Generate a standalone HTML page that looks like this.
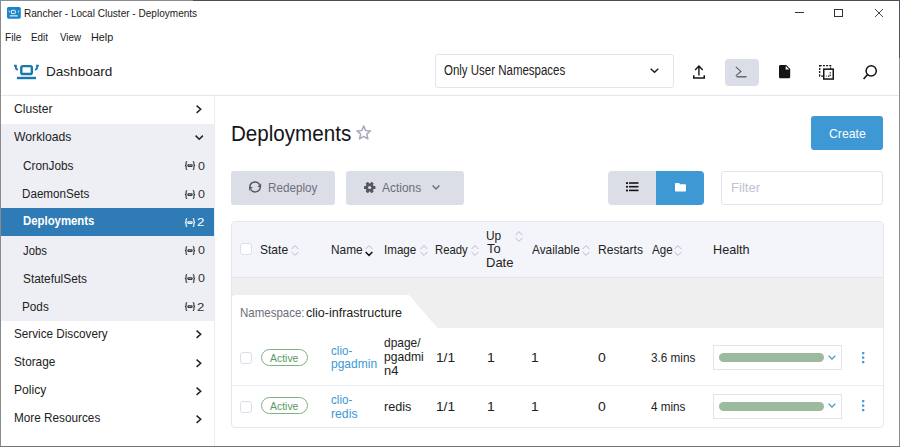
<!DOCTYPE html>
<html><head><meta charset="utf-8">
<style>
*{box-sizing:border-box;margin:0;padding:0}
html,body{width:900px;height:447px;overflow:hidden;background:#fff}
body{font-family:"Liberation Sans",sans-serif;color:#222;position:relative}
.a{position:absolute}
.t{position:absolute;white-space:nowrap;line-height:1;transform-origin:0 0}
svg{position:absolute;overflow:visible}
</style></head><body>
<div class="a" style="left:0;top:0;width:900px;height:1px;background:#8a8d93"></div>
<div class="a" style="left:193px;top:0;width:707px;height:1px;background:#4b505c"></div>
<div class="a" style="left:0;top:0;width:1px;height:447px;background:#8a8a8a"></div>
<div class="a" style="left:899px;top:0;width:1px;height:447px;background:#8c8c8c"></div>
<div class="a" style="left:899px;top:0;width:1px;height:58px;background:#4e5360"></div>
<div class="a" style="left:0;top:446px;width:900px;height:1px;background:#777"></div>
<svg style="left:7px;top:7.1px" width="14" height="12" viewBox="0 0 14 12">
 <rect x="0" y="0" width="13.8" height="11.7" rx="1.6" fill="#1a85c8"/>
 <rect x="4.35" y="3.3" width="3.95" height="3.35" rx="0.7" fill="none" stroke="#fff" stroke-width="0.95"/>
 <rect x="2.7" y="8.2" width="8" height="1.3" fill="#d2e7f5"/>
 <path d="M1.9 3.4L2.7 5.7M11.9 3.4L11.1 5.7" stroke="#bcdcf1" stroke-width="0.95"/>
</svg>
<div class="t" style="left:23.70px;top:8.00px;font-size:11px;color:#1a1a1a;transform:scaleX(0.9136);">Rancher - Local Cluster - Deployments</div>
<div class="a" style="left:795px;top:12px;width:9px;height:1px;background:#333"></div>
<div class="a" style="left:834px;top:9px;width:9px;height:8px;border:1px solid #333"></div>
<svg style="left:875px;top:9px" width="8" height="8" viewBox="0 0 8 8"><path d="M0 0L8 8M8 0L0 8" stroke="#3a3a3a" stroke-width="0.95"/></svg>
<div class="t" style="left:5.19px;top:32.00px;font-size:11px;color:#1a1a1a;transform:scaleX(0.9183);">File</div>
<div class="t" style="left:31.22px;top:32.00px;font-size:11px;color:#1a1a1a;transform:scaleX(0.8896);">Edit</div>
<div class="t" style="left:59.95px;top:32.00px;font-size:11px;color:#1a1a1a;transform:scaleX(0.8900);">View</div>
<div class="t" style="left:91.13px;top:32.00px;font-size:11px;color:#1a1a1a;transform:scaleX(0.9866);">Help</div>
<div class="a" style="left:1px;top:95px;width:898px;height:1px;background:#e6e7ec"></div>
<svg style="left:12px;top:62px" width="30" height="20" viewBox="0 0 30 20">
 <rect x="9.3" y="4.1" width="10.55" height="7.9" rx="1.6" fill="none" stroke="#1a78b0" stroke-width="2.4"/>
 <rect x="4.9" y="14.8" width="19.1" height="2.4" fill="#1a78b0"/>
 <path d="M2 3.75H3.9V5.8Q3.9 7.5 6 7.6" fill="none" stroke="#1a78b0" stroke-width="1.8"/>
 <path d="M26.9 3.75H25V5.8Q25 7.5 22.9 7.6" fill="none" stroke="#1a78b0" stroke-width="1.8"/>
</svg>
<div class="t" style="left:45.62px;top:65.00px;font-size:13.5px;color:#222;transform:scaleX(1.0038);">Dashboard</div>
<div class="a" style="left:435px;top:54px;width:239px;height:34px;border:1px solid #e3e4eb;border-radius:3px"></div>
<div class="t" style="left:443.88px;top:63.00px;font-size:14px;color:#222;transform:scaleX(0.8199);">Only User Namespaces</div>
<svg style="left:650px;top:68px" width="9" height="5" viewBox="0 0 9 5"><path d="M0.7 0.7L4.5 4.3L8.3 0.7" fill="none" stroke="#222" stroke-width="1.5"/></svg>
<svg style="left:693px;top:65px" width="12" height="14" viewBox="0 0 12 14">
 <path d="M5.9 1.3V10.6M2.1 4.9L5.9 1.1L9.7 4.9" fill="none" stroke="#141419" stroke-width="1.4"/>
 <path d="M0.75 10.2V13H11.25V10.2" fill="none" stroke="#141419" stroke-width="1.5"/>
</svg>
<div class="a" style="left:725px;top:58.5px;width:34px;height:27.5px;background:#dcdee7;border-radius:4px"></div>
<svg style="left:735px;top:66px" width="12" height="13" viewBox="0 0 12 13">
 <path d="M0.8 0.9L5.9 5.4L0.8 9.9" fill="none" stroke="#5c5e6a" stroke-width="1.2"/>
 <rect x="1.5" y="10.1" width="10" height="1.4" fill="#5c5e6a"/>
</svg>
<svg style="left:778.7px;top:65.3px" width="11.2" height="13.3" viewBox="0 0 11.2 13.3">
 <path d="M1.3 0H7.2L11.2 4V12Q11.2 13.3 9.9 13.3H1.3Q0 13.3 0 12V1.3Q0 0 1.3 0Z" fill="#141419"/>
 <path d="M6.7 1.1V4.5H10.1Z" fill="#fff"/>
</svg>
<svg style="left:819px;top:64.6px" width="15" height="15" viewBox="0 0 15 15">
 <rect x="0.7" y="0.7" width="10.9" height="10.4" fill="none" stroke="#141419" stroke-width="1.3" stroke-dasharray="2 1.2"/>
 <rect x="4.75" y="4.15" width="9.5" height="9.9" fill="#fff" stroke="#141419" stroke-width="1.5"/>
 <path d="M11.2 7.2V11.1H7.4" fill="none" stroke="#141419" stroke-width="1.1" stroke-dasharray="1.3 1.1"/>
</svg>
<svg style="left:863px;top:64.6px" width="15" height="15" viewBox="0 0 15 15">
 <circle cx="8.2" cy="5.9" r="5.1" fill="none" stroke="#141419" stroke-width="1.5"/>
 <path d="M4.7 9.5L0.6 14" stroke="#141419" stroke-width="1.6"/>
</svg>
<div class="a" style="left:1px;top:124.14px;width:213px;height:196.98px;background:#eeeff4"></div>
<div class="a" style="left:1px;top:208.26px;width:213px;height:28.14px;background:#2f7bb5"></div>
<div class="a" style="left:214px;top:96px;width:1px;height:350px;background:#ebecf1"></div>
<div class="t" style="left:13.89px;top:102.00px;font-size:13px;color:#222;transform:scaleX(0.9330);">Cluster</div>
<svg style="left:196.3px;top:105.30px" width="5.5" height="8.5" viewBox="0 0 5.5 8.5"><path d="M0.6 0.6L4.7 4.25L0.6 7.9" fill="none" stroke="#222" stroke-width="1.5"/></svg>
<div class="t" style="left:14.44px;top:130.00px;font-size:13px;color:#222;transform:scaleX(0.9382);">Workloads</div>
<svg style="left:194.8px;top:135.44px" width="8.5" height="5" viewBox="0 0 8.5 5"><path d="M0.6 0.6L4.25 4.3L7.9 0.6" fill="none" stroke="#222" stroke-width="1.5"/></svg>
<div class="t" style="left:22.71px;top:160.00px;font-size:12.5px;color:#222;transform:scaleX(0.9440);">CronJobs</div>
<svg style="left:184.5px;top:161.38px" width="10" height="9" viewBox="0 0 10 9">
 <path d="M2.2 0.5Q1.1 0.5 1.1 1.6V3.7L0.4 4.5L1.1 5.3V7.4Q1.1 8.5 2.2 8.5" fill="none" stroke="#333" stroke-width="1.1"/>
 <path d="M7.8 0.5Q8.9 0.5 8.9 1.6V3.7L9.6 4.5L8.9 5.3V7.4Q8.9 8.5 7.8 8.5" fill="none" stroke="#333" stroke-width="1.1"/>
 <rect x="2.3" y="3.2" width="5.4" height="2.7" rx="1.1" fill="#333"/>
 <rect x="3.6" y="4.2" width="2.8" height="0.7" fill="#eeeff4" opacity="0.7"/>
</svg>
<div class="t" style="left:197.50px;top:161.00px;font-size:11px;color:#333;transform:scaleX(1.1364);">0</div>
<div class="t" style="left:22.37px;top:188.00px;font-size:12.5px;color:#222;transform:scaleX(0.9320);">DaemonSets</div>
<svg style="left:184.5px;top:189.52px" width="10" height="9" viewBox="0 0 10 9">
 <path d="M2.2 0.5Q1.1 0.5 1.1 1.6V3.7L0.4 4.5L1.1 5.3V7.4Q1.1 8.5 2.2 8.5" fill="none" stroke="#333" stroke-width="1.1"/>
 <path d="M7.8 0.5Q8.9 0.5 8.9 1.6V3.7L9.6 4.5L8.9 5.3V7.4Q8.9 8.5 7.8 8.5" fill="none" stroke="#333" stroke-width="1.1"/>
 <rect x="2.3" y="3.2" width="5.4" height="2.7" rx="1.1" fill="#333"/>
 <rect x="3.6" y="4.2" width="2.8" height="0.7" fill="#eeeff4" opacity="0.7"/>
</svg>
<div class="t" style="left:197.50px;top:189.00px;font-size:11px;color:#333;transform:scaleX(1.1364);">0</div>
<div class="t" style="left:22.66px;top:215.00px;font-size:12.5px;color:#fff;font-weight:bold;transform:scaleX(0.9095);">Deployments</div>
<svg style="left:184.5px;top:217.66px" width="10" height="9" viewBox="0 0 10 9">
 <path d="M2.2 0.5Q1.1 0.5 1.1 1.6V3.7L0.4 4.5L1.1 5.3V7.4Q1.1 8.5 2.2 8.5" fill="none" stroke="#fff" stroke-width="1.1"/>
 <path d="M7.8 0.5Q8.9 0.5 8.9 1.6V3.7L9.6 4.5L8.9 5.3V7.4Q8.9 8.5 7.8 8.5" fill="none" stroke="#fff" stroke-width="1.1"/>
 <rect x="2.3" y="3.2" width="5.4" height="2.7" rx="1.1" fill="#fff"/>
 <rect x="3.6" y="4.2" width="2.8" height="0.7" fill="#2f7bb5" opacity="0.7"/>
</svg>
<div class="t" style="left:197.34px;top:217.00px;font-size:11px;color:#fff;transform:scaleX(1.1988);">2</div>
<div class="t" style="left:23.13px;top:245.00px;font-size:12.5px;color:#222;transform:scaleX(0.9010);">Jobs</div>
<svg style="left:184.5px;top:245.80px" width="10" height="9" viewBox="0 0 10 9">
 <path d="M2.2 0.5Q1.1 0.5 1.1 1.6V3.7L0.4 4.5L1.1 5.3V7.4Q1.1 8.5 2.2 8.5" fill="none" stroke="#333" stroke-width="1.1"/>
 <path d="M7.8 0.5Q8.9 0.5 8.9 1.6V3.7L9.6 4.5L8.9 5.3V7.4Q8.9 8.5 7.8 8.5" fill="none" stroke="#333" stroke-width="1.1"/>
 <rect x="2.3" y="3.2" width="5.4" height="2.7" rx="1.1" fill="#333"/>
 <rect x="3.6" y="4.2" width="2.8" height="0.7" fill="#eeeff4" opacity="0.7"/>
</svg>
<div class="t" style="left:197.50px;top:245.00px;font-size:11px;color:#333;transform:scaleX(1.1364);">0</div>
<div class="t" style="left:22.77px;top:273.00px;font-size:12.5px;color:#222;transform:scaleX(0.9492);">StatefulSets</div>
<svg style="left:184.5px;top:273.94px" width="10" height="9" viewBox="0 0 10 9">
 <path d="M2.2 0.5Q1.1 0.5 1.1 1.6V3.7L0.4 4.5L1.1 5.3V7.4Q1.1 8.5 2.2 8.5" fill="none" stroke="#333" stroke-width="1.1"/>
 <path d="M7.8 0.5Q8.9 0.5 8.9 1.6V3.7L9.6 4.5L8.9 5.3V7.4Q8.9 8.5 7.8 8.5" fill="none" stroke="#333" stroke-width="1.1"/>
 <rect x="2.3" y="3.2" width="5.4" height="2.7" rx="1.1" fill="#333"/>
 <rect x="3.6" y="4.2" width="2.8" height="0.7" fill="#eeeff4" opacity="0.7"/>
</svg>
<div class="t" style="left:197.50px;top:273.00px;font-size:11px;color:#333;transform:scaleX(1.1364);">0</div>
<div class="t" style="left:22.36px;top:301.00px;font-size:12.5px;color:#222;transform:scaleX(0.9386);">Pods</div>
<svg style="left:184.5px;top:302.08px" width="10" height="9" viewBox="0 0 10 9">
 <path d="M2.2 0.5Q1.1 0.5 1.1 1.6V3.7L0.4 4.5L1.1 5.3V7.4Q1.1 8.5 2.2 8.5" fill="none" stroke="#333" stroke-width="1.1"/>
 <path d="M7.8 0.5Q8.9 0.5 8.9 1.6V3.7L9.6 4.5L8.9 5.3V7.4Q8.9 8.5 7.8 8.5" fill="none" stroke="#333" stroke-width="1.1"/>
 <rect x="2.3" y="3.2" width="5.4" height="2.7" rx="1.1" fill="#333"/>
 <rect x="3.6" y="4.2" width="2.8" height="0.7" fill="#eeeff4" opacity="0.7"/>
</svg>
<div class="t" style="left:197.34px;top:302.00px;font-size:11px;color:#333;transform:scaleX(1.1988);">2</div>
<div class="t" style="left:13.97px;top:327.00px;font-size:13px;color:#222;transform:scaleX(0.9003);">Service Discovery</div>
<svg style="left:196.3px;top:330.42px" width="5.5" height="8.5" viewBox="0 0 5.5 8.5"><path d="M0.6 0.6L4.7 4.25L0.6 7.9" fill="none" stroke="#222" stroke-width="1.5"/></svg>
<div class="t" style="left:13.97px;top:355.00px;font-size:13px;color:#222;transform:scaleX(0.9068);">Storage</div>
<svg style="left:196.3px;top:358.56px" width="5.5" height="8.5" viewBox="0 0 5.5 8.5"><path d="M0.6 0.6L4.7 4.25L0.6 7.9" fill="none" stroke="#222" stroke-width="1.5"/></svg>
<div class="t" style="left:13.53px;top:383.00px;font-size:13px;color:#222;transform:scaleX(0.9326);">Policy</div>
<svg style="left:196.3px;top:386.70px" width="5.5" height="8.5" viewBox="0 0 5.5 8.5"><path d="M0.6 0.6L4.7 4.25L0.6 7.9" fill="none" stroke="#222" stroke-width="1.5"/></svg>
<div class="t" style="left:13.56px;top:411.00px;font-size:13px;color:#222;transform:scaleX(0.9045);">More Resources</div>
<svg style="left:196.3px;top:414.84px" width="5.5" height="8.5" viewBox="0 0 5.5 8.5"><path d="M0.6 0.6L4.7 4.25L0.6 7.9" fill="none" stroke="#222" stroke-width="1.5"/></svg>
<div class="t" style="left:230.85px;top:124.00px;font-size:21.5px;color:#141419;transform:scaleX(0.9579);">Deployments</div>
<svg style="left:355.6px;top:124.9px" width="15.4" height="15" viewBox="0 0 15.4 15">
 <path d="M7.70 1.05 L9.58 5.57 L14.45 5.96 L10.74 9.14 L11.87 13.89 L7.70 11.35 L3.53 13.89 L4.66 9.14 L0.95 5.96 L5.82 5.57Z" fill="none" stroke="#a7aabd" stroke-width="1.55" stroke-linejoin="round"/>
</svg>
<div class="a" style="left:811px;top:116px;width:72px;height:34px;background:#3d98d3;border-radius:3px"></div>
<div class="t" style="left:828.89px;top:127.00px;font-size:13.5px;color:#fff;transform:scaleX(0.9052);">Create</div>
<div class="a" style="left:231px;top:171px;width:104px;height:34px;background:#dcdee7;border-radius:3px"></div>
<svg style="left:249.2px;top:181.2px" width="12.5" height="12" viewBox="0 0 12.5 12">
 <path d="M0.9 6.6A5.2 5.2 0 0 1 10.6 3.6" fill="none" stroke="#54565f" stroke-width="1.45"/>
 <path d="M11.3 5.6A5.2 5.2 0 0 1 1.8 8.6" fill="none" stroke="#54565f" stroke-width="1.45"/>
 <path d="M12.1 2.2V6.1H8.4Z" fill="#54565f"/>
 <path d="M0.1 10V6.1H3.8Z" fill="#54565f"/>
</svg>
<div class="t" style="left:268.37px;top:182.00px;font-size:12.5px;color:#6c6e7a;transform:scaleX(0.9341);">Redeploy</div>
<div class="a" style="left:346px;top:171px;width:118px;height:34px;background:#dcdee7;border-radius:3px"></div>
<svg style="left:364.4px;top:181.6px" width="11.4" height="11" viewBox="-5.7 -5.5 11.4 11">
 <g fill="#54565f">
 <circle r="4"/>
 <rect x="-5.7" y="-1.5" width="11.4" height="3" rx="0.6"/>
 <rect x="-5.7" y="-1.5" width="11.4" height="3" rx="0.6" transform="rotate(60)"/>
 <rect x="-5.7" y="-1.5" width="11.4" height="3" rx="0.6" transform="rotate(120)"/>
 </g>
 <circle r="1.6" fill="#dcdee7"/>
</svg>
<div class="t" style="left:381.90px;top:182.00px;font-size:12.5px;color:#6c6e7a;transform:scaleX(0.9541);">Actions</div>
<svg style="left:432px;top:185px" width="8" height="5" viewBox="0 0 8 5"><path d="M0.6 0.6L4 4.1L7.4 0.6" fill="none" stroke="#6c6e7a" stroke-width="1.4"/></svg>
<div class="a" style="left:608px;top:171px;width:48px;height:34px;background:#dcdee7;border-radius:4px 0 0 4px"></div><div class="a" style="left:656px;top:171px;width:48px;height:34px;background:#3d98d3;border-radius:0 4px 4px 0"></div>
<svg style="left:626px;top:182.3px" width="12.5" height="9.5" viewBox="0 0 12.5 9.5">
 <g fill="#141419"><rect x="0" y="0" width="2" height="2" rx="0.6"/><rect x="0" y="3.7" width="2" height="2" rx="0.6"/><rect x="0" y="7.4" width="2" height="2" rx="0.6"/>
 <rect x="3" y="0.2" width="9.5" height="1.6"/><rect x="3" y="3.9" width="9.5" height="1.6"/><rect x="3" y="7.6" width="9.5" height="1.6"/></g>
</svg>
<svg style="left:674.7px;top:183px" width="11" height="8.5" viewBox="0 0 11 8.5">
 <path d="M0.8 0H4L5.2 1.2H10.2Q11 1.2 11 2V7.7Q11 8.5 10.2 8.5H0.8Q0 8.5 0 7.7V0.8Q0 0 0.8 0Z" fill="#fff"/>
</svg>
<div class="a" style="left:721px;top:171px;width:162px;height:34px;border:1px solid #e3e4eb;border-radius:3px"></div>
<div class="t" style="left:730.65px;top:181.00px;font-size:13px;color:#c0c3d3;transform:scaleX(1.0100);">Filter</div>
<div class="a" style="left:231px;top:221px;width:653px;height:207px;border:1px solid #e6e7ed;border-radius:4px;overflow:hidden"><div class="a" style="left:0;top:0;width:651px;height:56px;background:#f4f5fa;border-bottom:1px solid #e6e7ed"></div><div class="a" style="left:0;top:56px;width:651px;height:50px;background:#efefef"></div></div>
<svg style="left:232px;top:295px" width="206" height="33" viewBox="0 0 206 33"><path d="M0 4Q0 0 4 0H177L205.5 33H0Z" fill="#fff"/></svg>
<div class="t" style="left:239.58px;top:306.00px;font-size:13px;color:#6c6e7a;transform:scaleX(0.8838);">Namespace:</div>
<div class="t" style="left:305.80px;top:306.00px;font-size:13px;color:#222;transform:scaleX(0.9634);">clio-infrastructure</div>
<div class="a" style="left:232px;top:385px;width:651px;height:1px;background:#ebecf0"></div>
<div class="a" style="left:240px;top:242.5px;width:12px;height:12px;background:#fff;border:1px solid #dcdee7;border-radius:3px"></div>
<div class="t" style="left:260.16px;top:243.00px;font-size:13px;color:#222;transform:scaleX(0.9251);">State</div>
<svg style="left:290.6px;top:244.6px" width="8" height="11" viewBox="0 0 8 11"><path d="M0.6 4L4 0.6L7.4 4" fill="none" stroke="#b6b9cb" stroke-width="1"/><path d="M0.6 7L4 10.4L7.4 7" fill="none" stroke="#b6b9cb" stroke-width="1"/></svg>
<div class="t" style="left:330.85px;top:243.00px;font-size:13px;color:#222;transform:scaleX(0.9116);">Name</div>
<svg style="left:365px;top:244.6px" width="8" height="11" viewBox="0 0 8 11"><path d="M0.6 4L4 0.6L7.4 4" fill="none" stroke="#b6b9cb" stroke-width="1"/><path d="M0.6 7L4 10.4L7.4 7" fill="none" stroke="#141419" stroke-width="1.5"/></svg>
<div class="t" style="left:384.36px;top:243.00px;font-size:13px;color:#222;transform:scaleX(0.8928);">Image</div>
<svg style="left:419.5px;top:244.6px" width="8" height="11" viewBox="0 0 8 11"><path d="M0.6 4L4 0.6L7.4 4" fill="none" stroke="#b6b9cb" stroke-width="1"/><path d="M0.6 7L4 10.4L7.4 7" fill="none" stroke="#b6b9cb" stroke-width="1"/></svg>
<div class="t" style="left:435.29px;top:243.00px;font-size:13px;color:#222;transform:scaleX(0.8705);">Ready</div>
<svg style="left:471px;top:244.6px" width="8" height="11" viewBox="0 0 8 11"><path d="M0.6 4L4 0.6L7.4 4" fill="none" stroke="#b6b9cb" stroke-width="1"/><path d="M0.6 7L4 10.4L7.4 7" fill="none" stroke="#b6b9cb" stroke-width="1"/></svg>
<div class="t" style="left:486.31px;top:229.00px;font-size:13px;color:#222;transform:scaleX(0.9151);">Up</div>
<div class="t" style="left:486.94px;top:242.00px;font-size:13px;color:#222;transform:scaleX(0.9896);">To</div>
<div class="t" style="left:486.16px;top:256.00px;font-size:13px;color:#222;transform:scaleX(0.9998);">Date</div>
<svg style="left:515.2px;top:231px" width="8" height="11" viewBox="0 0 8 11"><path d="M0.6 4L4 0.6L7.4 4" fill="none" stroke="#b6b9cb" stroke-width="1"/><path d="M0.6 7L4 10.4L7.4 7" fill="none" stroke="#b6b9cb" stroke-width="1"/></svg>
<div class="t" style="left:532.00px;top:243.00px;font-size:13px;color:#222;transform:scaleX(0.9108);">Available</div>
<svg style="left:582px;top:244.6px" width="8" height="11" viewBox="0 0 8 11"><path d="M0.6 4L4 0.6L7.4 4" fill="none" stroke="#b6b9cb" stroke-width="1"/><path d="M0.6 7L4 10.4L7.4 7" fill="none" stroke="#b6b9cb" stroke-width="1"/></svg>
<div class="t" style="left:597.93px;top:243.00px;font-size:13px;color:#222;transform:scaleX(0.9290);">Restarts</div>
<div class="t" style="left:651.60px;top:243.00px;font-size:13px;color:#222;transform:scaleX(0.8912);">Age</div>
<svg style="left:674px;top:244.6px" width="8" height="11" viewBox="0 0 8 11"><path d="M0.6 4L4 0.6L7.4 4" fill="none" stroke="#b6b9cb" stroke-width="1"/><path d="M0.6 7L4 10.4L7.4 7" fill="none" stroke="#b6b9cb" stroke-width="1"/></svg>
<div class="t" style="left:713.29px;top:243.00px;font-size:13px;color:#222;transform:scaleX(0.9724);">Health</div>
<div class="a" style="left:240px;top:352px;width:12px;height:12px;background:#fff;border:1px solid #dcdee7;border-radius:3px"></div>
<div class="a" style="left:261px;top:349.0px;width:46.5px;height:17px;border:1px solid #7fb282;border-radius:9px"></div>
<div class="t" style="left:270.30px;top:353.00px;font-size:11px;color:#5a9a5f;transform:scaleX(0.9482);">Active</div>
<div class="t" style="left:331.24px;top:344.00px;font-size:13px;color:#3d98d3;transform:scaleX(0.8923);">clio-</div>
<div class="t" style="left:330.92px;top:357.00px;font-size:13px;color:#3d98d3;transform:scaleX(0.9239);">pgadmin</div>
<div class="t" style="left:384.42px;top:336.00px;font-size:13px;color:#222;transform:scaleX(0.9170);">dpage/</div>
<div class="t" style="left:384.11px;top:350.00px;font-size:13px;color:#222;transform:scaleX(0.9304);">pgadmi</div>
<div class="t" style="left:384.06px;top:364.00px;font-size:13px;color:#222;transform:scaleX(0.9928);">n4</div>
<div class="t" style="left:435.57px;top:351.00px;font-size:13px;color:#222;transform:scaleX(1.0539);">1/1</div>
<div class="t" style="left:486.65px;top:351.00px;font-size:13px;color:#222;transform:scaleX(1.0787);">1</div>
<div class="t" style="left:530.97px;top:351.00px;font-size:13px;color:#222;transform:scaleX(1.0610);">1</div>
<div class="t" style="left:598.14px;top:351.00px;font-size:13px;color:#222;transform:scaleX(1.0737);">0</div>
<div class="t" style="left:650.83px;top:351.00px;font-size:13px;color:#222;transform:scaleX(0.9011);">3.6 mins</div>
<div class="a" style="left:713px;top:345.4px;width:129px;height:25px;border:1px solid #e3e4eb"></div>
<div class="a" style="left:719px;top:353.4px;width:105px;height:9px;background:#9bba9e;border-radius:5px"></div>
<svg style="left:828px;top:355.0px" width="8" height="5" viewBox="0 0 8 5"><path d="M0.6 0.6L4 4.1L7.4 0.6" fill="none" stroke="#3d98d3" stroke-width="1.3"/></svg>
<svg style="left:861.6px;top:351.7px" width="2.3" height="11.5" viewBox="0 0 2.3 11.5"><g fill="#3d98d3"><rect x="0" y="0" width="2.3" height="2.3" rx="0.5"/><rect x="0" y="4.5" width="2.3" height="2.3" rx="0.5"/><rect x="0" y="9" width="2.3" height="2.3" rx="0.5"/></g></svg>
<div class="a" style="left:240px;top:400.5px;width:12px;height:12px;background:#fff;border:1px solid #dcdee7;border-radius:3px"></div>
<div class="a" style="left:261px;top:397.4px;width:46.5px;height:17px;border:1px solid #7fb282;border-radius:9px"></div>
<div class="t" style="left:270.30px;top:401.00px;font-size:11px;color:#5a9a5f;transform:scaleX(0.9482);">Active</div>
<div class="t" style="left:331.24px;top:393.00px;font-size:13px;color:#3d98d3;transform:scaleX(0.8923);">clio-</div>
<div class="t" style="left:330.91px;top:407.00px;font-size:13px;color:#3d98d3;transform:scaleX(0.9402);">redis</div>
<div class="t" style="left:384.08px;top:400.00px;font-size:13px;color:#222;transform:scaleX(0.9699);">redis</div>
<div class="t" style="left:435.57px;top:400.00px;font-size:13px;color:#222;transform:scaleX(1.0539);">1/1</div>
<div class="t" style="left:486.65px;top:400.00px;font-size:13px;color:#222;transform:scaleX(1.0787);">1</div>
<div class="t" style="left:530.97px;top:400.00px;font-size:13px;color:#222;transform:scaleX(1.0610);">1</div>
<div class="t" style="left:598.14px;top:400.00px;font-size:13px;color:#222;transform:scaleX(1.0737);">0</div>
<div class="t" style="left:651.07px;top:400.00px;font-size:13px;color:#222;transform:scaleX(0.8970);">4 mins</div>
<div class="a" style="left:713px;top:393.6px;width:129px;height:25px;border:1px solid #e3e4eb"></div>
<div class="a" style="left:719px;top:401.6px;width:105px;height:9px;background:#9bba9e;border-radius:5px"></div>
<svg style="left:828px;top:403.20000000000005px" width="8" height="5" viewBox="0 0 8 5"><path d="M0.6 0.6L4 4.1L7.4 0.6" fill="none" stroke="#3d98d3" stroke-width="1.3"/></svg>
<svg style="left:861.6px;top:399.9px" width="2.3" height="11.5" viewBox="0 0 2.3 11.5"><g fill="#3d98d3"><rect x="0" y="0" width="2.3" height="2.3" rx="0.5"/><rect x="0" y="4.5" width="2.3" height="2.3" rx="0.5"/><rect x="0" y="9" width="2.3" height="2.3" rx="0.5"/></g></svg>
</body></html>
